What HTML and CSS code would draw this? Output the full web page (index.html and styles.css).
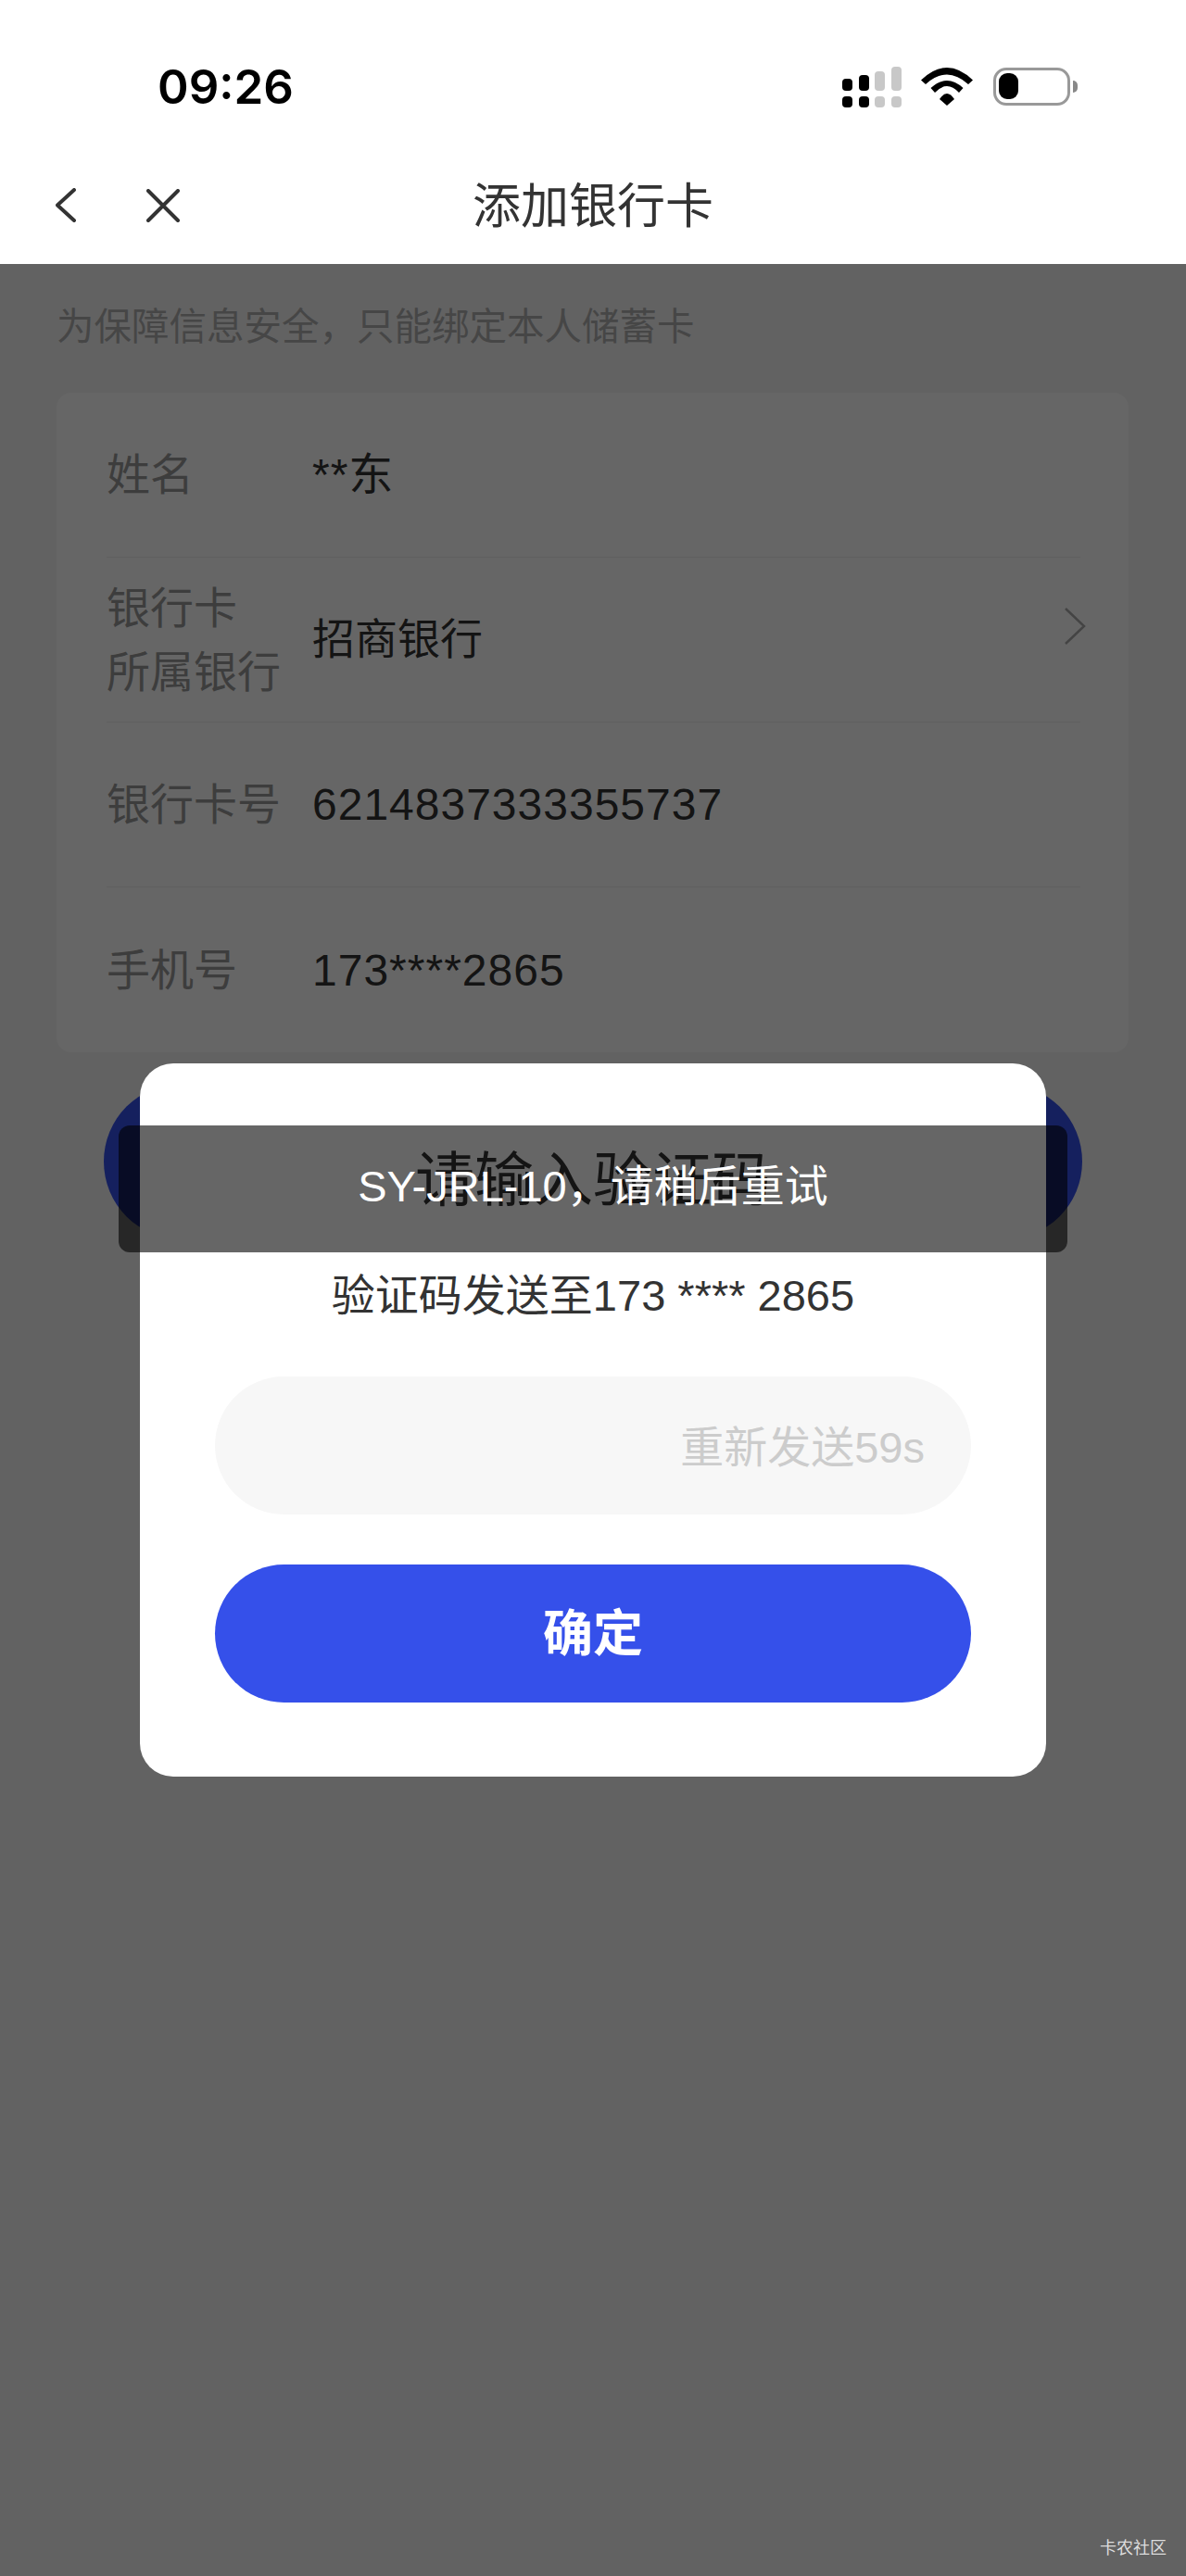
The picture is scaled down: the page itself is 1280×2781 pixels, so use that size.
FILE: index.html
```html
<!DOCTYPE html>
<html lang="zh">
<head>
    <meta charset="UTF-8">
    <meta name="viewport" content="width=device-width, initial-scale=1.0">
    <title>添加银行卡</title>
    <link rel="stylesheet" href="styles.css">
</head>
<body>

    <div class="status-bar">
        <span class="time">09:26</span>
        <div class="status-icons">
            <svg class="signal" width="64" height="44" viewBox="0 0 64 44">
                <rect x="0" y="13" width="11" height="13" rx="4" fill="#000"/>
                <rect x="18" y="9" width="11" height="17" rx="4" fill="#000"/>
                <rect x="35" y="5" width="11" height="21" rx="4" fill="#c8c8c8"/>
                <rect x="53" y="0" width="11" height="26" rx="4" fill="#c8c8c8"/>
                <rect x="0" y="32" width="11" height="12" rx="4" fill="#000"/>
                <rect x="18" y="32" width="11" height="12" rx="4" fill="#000"/>
                <rect x="35" y="32" width="11" height="12" rx="4" fill="#c8c8c8"/>
                <rect x="53" y="32" width="11" height="12" rx="4" fill="#c8c8c8"/>
            </svg>
            <svg class="wifi" width="56" height="41" viewBox="0 0 56 41">
                <path d="M0 13.5Q28 -13.5 56 13.5L51 18Q28 -3 5 18Z" fill="#000"/>
                <path d="M10.5 22Q28 6 45.5 22L41 27Q28 13 15 27Z" fill="#000"/>
                <path d="M20 34Q28 22 36 34L28 41Z" fill="#000"/>
            </svg>
            <div class="battery">
                <div class="battery-level"></div>
            </div>
            <div class="battery-cap"></div>
        </div>
    </div>

    <div class="nav">
        <div class="nav-icons">
            <svg width="22" height="37" viewBox="0 0 22 37">
                <path d="M20 2L2 18.5L20 35" fill="none" stroke="#333" stroke-width="4" stroke-linecap="round" stroke-linejoin="round"/>
            </svg>
            <svg width="36" height="36" viewBox="0 0 36 36">
                <path d="M2 2L34 34M34 2L2 34" fill="none" stroke="#333" stroke-width="4" stroke-linecap="round"/>
            </svg>
        </div>
        <h1 class="nav-title">添加银行卡</h1>
    </div>

    <p class="hint">为保障信息安全，只能绑定本人储蓄卡</p>

    <div class="card">
        <div class="row">
            <div class="label">姓名</div>
            <div class="value">**东</div>
        </div>
        <div class="row">
            <div class="label">银行卡<br>所属银行</div>
            <div class="value value-bank">招商银行</div>
            <svg class="chevron" width="24" height="40" viewBox="0 0 24 40">
                <path d="M2 1L22 20L2 39" fill="none" stroke="#aaa" stroke-width="2.5"/>
            </svg>
        </div>
        <div class="row">
            <div class="label">银行卡号</div>
            <div class="value">6214837333355737</div>
        </div>
        <div class="row">
            <div class="label">手机号</div>
            <div class="value">173****2865</div>
        </div>
    </div>

    <div class="next-btn"></div>

    <div class="mask">
        <div class="modal">
            <div class="modal-title">请输入验证码</div>
            <div class="modal-sub">验证码发送至173 **** 2865</div>
            <div class="code-input">
                <span class="resend">重新发送59s</span>
            </div>
            <div class="confirm">确定</div>
        </div>
    </div>

    <div class="toast">SY-JRL-10，请稍后重试</div>

    <div class="watermark">卡农社区</div>

</body>
</html>
```

FILE: styles.css
```css
* {
    box-sizing: border-box;
}
html, body {
    margin: 0;
    padding: 0;
}
body {
    position: relative;
    width: 1280px;
    height: 2781px;
    overflow: hidden;
    background: #f6f6f6;
    font-family: "Liberation Sans", "Noto Sans CJK SC", sans-serif;
    color: #333;
}

/* status bar */
.status-bar {
    height: 165px;
    padding: 0 117px 0 170px;
    display: flex;
    justify-content: space-between;
    align-items: center;
    background: #fff;
}
.time {
    font-family: Inter, "Liberation Sans", sans-serif;
    font-size: 51px;
    font-weight: 600;
    color: #000;
    margin-top: 22px;
}
.status-icons {
    display: flex;
    align-items: center;
    margin-top: 22px;
}
.wifi {
    margin-left: 21px;
}
.battery {
    width: 83px;
    height: 41px;
    margin-left: 22px;
    padding: 3px 0 0 3px;
    border: 3.5px solid #999;
    border-radius: 14px;
}
.battery-level {
    width: 21px;
    height: 28px;
    background: #000;
    border-radius: 9px;
}
.battery-cap {
    width: 5px;
    height: 13px;
    margin-left: 3px;
    background: #888;
    border-radius: 0 6px 6px 0;
}

/* nav */
.nav {
    position: relative;
    height: 120px;
    padding-bottom: 5px;
    background: #fff;
    display: flex;
    align-items: center;
    justify-content: center;
}
.nav-icons {
    position: absolute;
    left: 60px;
    top: 38px;
    display: flex;
    align-items: center;
    gap: 76px;
}
.nav-title {
    margin: 0;
    font-size: 52px;
    font-weight: normal;
    line-height: 60px;
}

/* page */
.hint {
    margin: 0;
    padding: 38px 0 0 61px;
    font-size: 40.5px;
    line-height: 60px;
    color: #b0b0b0;
}
.card {
    margin: 41px 62px 0 61px;
    padding: 0 52px 0 54px;
    background: #fff;
    border-radius: 16px;
}
.row {
    height: 178px;
    display: flex;
    align-items: center;
    font-size: 47px;
    line-height: 69px;
    border-bottom: 1.5px solid #eee;
}
.row:last-child {
    border-bottom: none;
}
.label {
    width: 222px;
    color: #999;
}
.value {
    flex: 1;
    font-size: 48px;
    letter-spacing: 1px;
    color: #333;
}
.value-bank {
    font-size: 46px;
    letter-spacing: 0;
}
.chevron {
    align-self: flex-start;
    margin: 54px -6px 0 0;
}
.next-btn {
    height: 168px;
    margin: 34px 112px 0;
    background: #3550ea;
    border-radius: 84px;
}

/* dialog */
.mask {
    position: absolute;
    top: 285px;
    left: 0;
    right: 0;
    bottom: 0;
    padding: 863px 151px 0 151px;
    background: rgba(0, 0, 0, 0.6);
}
.modal {
    height: 770px;
    padding: 84px 81px 0;
    background: #fff;
    border-radius: 36px;
    text-align: center;
}
.modal-title {
    font-size: 64px;
    line-height: 84px;
    color: #333;
}
.modal-sub {
    margin-top: 48px;
    margin-bottom: -2px;
    font-size: 47px;
    line-height: 70px;
    color: #333;
}
.code-input {
    height: 149px;
    margin-top: 54px;
    padding-right: 50px;
    background: #f7f7f7;
    border-radius: 75px;
    display: flex;
    align-items: center;
    justify-content: flex-end;
}
.resend {
    margin-bottom: 5px;
    font-size: 47px;
    color: #ccc;
}
.confirm {
    height: 149px;
    margin-top: 54px;
    background: #3550ea;
    border-radius: 75px;
    font-size: 54px;
    font-weight: bold;
    line-height: 150px;
    color: #fff;
}

/* toast over the dialog */
.toast {
    position: absolute;
    top: 1215px;
    left: 128px;
    width: 1024px;
    height: 137px;
    background: rgba(0, 0, 0, 0.6);
    border-radius: 12px;
    font-size: 47px;
    line-height: 132px;
    text-align: center;
    color: #fff;
}
.watermark {
    position: absolute;
    right: 21px;
    bottom: 18px;
    font-size: 18px;
    line-height: 24px;
    color: #ddd;
}
```
